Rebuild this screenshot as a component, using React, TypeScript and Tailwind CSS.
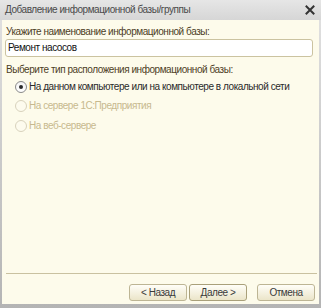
import React from "react";

const T = "text-[10px] tracking-[-0.45px] leading-none whitespace-nowrap";

function Radio({ checked, disabled, label }: { checked?: boolean; disabled?: boolean; label: string }) {
  return (
    <div className="flex items-center h-[19.5px] pl-[13px]">
      <span
        className={
          "flex items-center justify-center w-[12px] h-[12px] rounded-full border " +
          (disabled ? "border-[#d8d2bc] bg-[#fdfbee]" : "border-[#8a8a8a] bg-gradient-to-b from-[#f4f4f4] to-[#ffffff]")
        }
      >
        {checked && <span className="w-[4px] h-[4px] rounded-full bg-[#2a2a2a]" />}
      </span>
      <span className={"ml-[2px] " + T + " " + (disabled ? "text-[#c7b98e]" : "text-[#2a2a2a]")}>{label}</span>
    </div>
  );
}

function Btn({ children, primary }: { children: React.ReactNode; primary?: boolean }) {
  return (
    <button
      className={
        "w-[58px] h-[17px] rounded-[3px] border text-[#3a3a3a] bg-gradient-to-b from-[#fffef8] to-[#ebe5c9] flex items-center justify-center " +
        T +
        " " +
        (primary ? "border-[#a9a07a]" : "border-[#bdb594]")
      }
    >
      {children}
    </button>
  );
}

export default function App() {
  return (
    <div
      className="w-[321px] h-[308px] flex flex-col bg-gradient-to-b from-[#e2e2e2] to-[#b4b4b4]"
      style={{ fontFamily: '"Liberation Sans", Arial, sans-serif' }}
    >
      <div className="h-[20px] flex items-center justify-between pl-[5px] pr-[5px] bg-gradient-to-b from-[#e6e6e6] to-[#d6d6d6]">
        <span className={T + " text-[#4a4a4a]"}>Добавление информационной базы/группы</span>
        <svg width="10" height="10" viewBox="0 0 10 10" className="mr-[1px]">
          <path d="M1.5 1.5 L8.5 8.5 M8.5 1.5 L1.5 8.5" stroke="#333" strokeWidth="2" strokeLinecap="square" />
        </svg>
      </div>
      <div className="flex-1 ml-[2px] mr-[2px] mb-[4px] bg-[#fdfbeb] flex flex-col">
        <div className={"pl-[4px] pt-[7px] h-[19px] text-[#4d4026] " + T}>
          Укажите наименование информационной базы:
        </div>
        <div className="ml-[3px] mr-[6px] h-[18px] rounded-[3px] border border-[#cbc3a0] bg-white flex items-center pl-[2px]">
          <span className={T + " text-[#111]"}>Ремонт насосов</span>
        </div>
        <div className={"pl-[4px] pt-[8px] h-[24px] text-[#4d4026] " + T}>
          Выберите тип расположения информационной базы:
        </div>
        <div className="flex flex-col -mt-[4px]">
          <Radio checked label="На данном компьютере или на компьютере в локальной сети" />
          <Radio disabled label="На сервере 1С:Предприятия" />
          <Radio disabled label="На веб-сервере" />
        </div>
        <div className="flex-1" />
        <div className="ml-[4px] mr-[2px] h-[1px] bg-[#c9c1a0]" />
        <div className="flex justify-end gap-[2px] pr-[4px] pt-[10px] pb-[3px]">
          <Btn>&lt; Назад</Btn>
          <Btn primary>Далее &gt;</Btn>
          <div className="w-[6px]" />
          <Btn>Отмена</Btn>
        </div>
      </div>
    </div>
  );
}
